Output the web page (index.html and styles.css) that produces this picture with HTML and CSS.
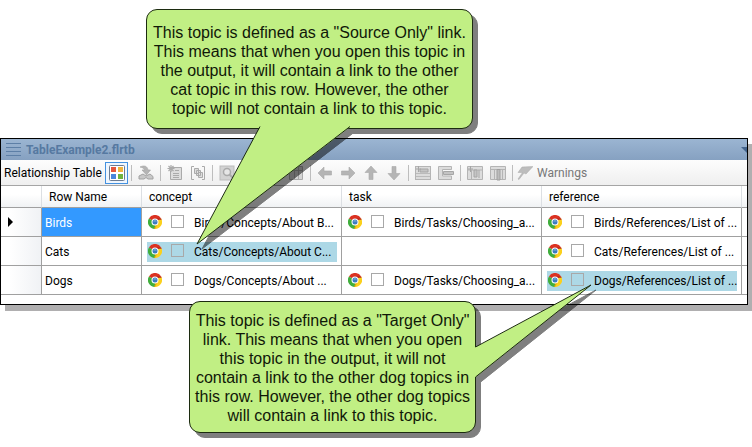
FILE: index.html
```html
<!DOCTYPE html>
<html lang="en">
<head>
<meta charset="utf-8">
<title>TableExample2.flrtb</title>
<link rel="stylesheet" href="styles.css">
</head>
<body>
<svg class="defs" aria-hidden="true">
  <symbol id="chrome" viewBox="0 0 14 14">
    <path d="M7 7 .9 3.5A7 7 0 0 1 13.1 3.5Z" fill="#db3222"/>
    <path d="M7 7 13.1 3.5A7 7 0 0 1 7 14Z" fill="#fbd01c"/>
    <path d="M7 7 7 14A7 7 0 0 1 .9 3.5Z" fill="#3fae3c"/>
    <path d="M7 3.6H13.1L13.6 4.8H8Z" fill="#b3251b"/>
    <path d="M9.9 8.6 6.9 14 6 13.8 8 9Z" fill="#d9a514"/>
    <circle cx="7" cy="7" r="3.5" fill="#fff"/>
    <circle cx="7" cy="7" r="2.5" fill="#3c7cc0"/>
    <path d="M5.2 6.4a2 2 0 0 1 3.6 0Z" fill="#7fb0de"/>
  </symbol>
</svg>
<main class="scene">
  <section class="window">
    <header class="titlebar">
      <svg class="grip" viewBox="0 0 15 14"><path d="M0 .5H15M0 4.5H15M0 8.5H15M0 12.5H15" stroke="#5d7fa6"/></svg>
      <h1>TableExample2.flrtb</h1>
      <svg class="caret" viewBox="0 0 6 6"><path d="M0 0H6V6Z" fill="#44648c"/></svg>
    </header>
    <div class="toolbar">
      <span class="toolbar-title">Relationship Table</span>
      <button class="tool active" aria-label="Show styles"><svg viewBox="0 0 16 16"><rect x=".5" y=".5" width="15" height="15" rx="1" fill="#fff" stroke="#6d7c92"/><rect x="2" y="2" width="5" height="5" fill="#e4573d"/><rect x="9" y="2" width="5" height="5" fill="#f0b43c"/><rect x="2" y="9" width="5" height="5" fill="#4a86dc"/><rect x="9" y="9" width="5" height="5" fill="#6fb33c"/></svg></button>
      <span class="sep"></span>
      <button class="tool" aria-label="Open topic"><svg viewBox="0 0 16 16"><path d="M2 2C6 0 9.500 1 10 5H12.500L8.500 10 4 5H6.500C6 3 4 2.500 2 2Z" fill="#b4b4b4" stroke="#a2a2a2" stroke-width=".6"/><path d="M1 11 5 9 8 11 12 9 15 11.500V14H10L8 12.500 6 14H1Z" fill="#c8c8c8" stroke="#a2a2a2"/></svg></button>
      <span class="sep"></span>
      <button class="tool" aria-label="New row"><svg viewBox="0 0 16 16"><path d="M4.500 2.500H14.500V14.500H3.500V6" fill="#ddd" stroke="#aaa"/><path d="M8 5.500H12M6 8.500H12M6 10.500H12M6 12.500H12" stroke="#aaa"/><path d="M4 0V7M.5 3.500H7.500M1.500 1 6.500 6M6.500 1 1.500 6" stroke="#aaa" stroke-width="1.200"/></svg></button>
      <button class="tool" aria-label="Row properties"><svg viewBox="0 0 16 16"><path d="M4 1.500H1.500V14.500H4M12 1.500H14.500V14.500H12" fill="none" stroke="#aaa"/><path d="M4.500 3.500H8.500V8.500H4.500ZM6.500 5.500H10.500V10.500H6.500ZM8.500 7.500H12.500V12.500H8.500Z" fill="#ddd" stroke="#aaa"/></svg></button>
      <span class="sep"></span>
      <button class="tool" aria-label="Preview"><svg viewBox="0 0 16 16"><rect x="1" y="1" width="14" height="14" fill="#d3d3d3" stroke="#bbb"/><circle cx="8" cy="7" r="3.500" fill="#e6e6e6" stroke="#aaa" stroke-width="1.500"/><path d="M10.500 9.500 14 13" stroke="#aaa" stroke-width="2"/></svg></button>
      <button class="tool" aria-label="Cut"></button>
      <button class="tool" aria-label="Copy"></button>
      <button class="tool" aria-label="Insert column"><svg viewBox="0 0 16 16"><path d="M1.500 1.500H14.500V14.500H1.500ZM6.500 2V14M10.500 2V14M2 5.500H14" fill="#d5d5d5" stroke="#aaa"/></svg></button>
      <span class="sep"></span>
      <button class="tool" aria-label="Move left"><svg viewBox="0 0 16 16"><path d="M1 8 7 2V6H14.500V10H7V14Z" fill="#b5b5b5" stroke="#aaa" stroke-width=".6"/></svg></button>
      <button class="tool" aria-label="Move right"><svg viewBox="0 0 16 16"><path d="M15 8 9 2V6H1.500V10H9V14Z" fill="#b5b5b5" stroke="#aaa" stroke-width=".6"/></svg></button>
      <button class="tool" aria-label="Move up"><svg viewBox="0 0 16 16"><path d="M8 1 14 7.500H10V14.500H6V7.500H2Z" fill="#b5b5b5" stroke="#aaa" stroke-width=".6"/></svg></button>
      <button class="tool" aria-label="Move down"><svg viewBox="0 0 16 16"><path d="M8 15 14 8.500H10V1.500H6V8.500H2Z" fill="#b5b5b5" stroke="#aaa" stroke-width=".6"/></svg></button>
      <span class="sep"></span>
      <button class="tool" aria-label="Insert row"><svg viewBox="0 0 16 16"><rect x=".5" y="1.500" width="15" height="13" fill="#dcdcdc" stroke="#b4b4b4"/><path d="M1 8.500H15M1 11.500H15" stroke="#bbb"/><path d="M5 4H13V7H5Z" fill="#c4c4c4" stroke="#a6a6a6"/><path d="M3.500 1V7M1 4H6" stroke="#a6a6a6"/></svg></button>
      <button class="tool" aria-label="Delete row"><svg viewBox="0 0 16 16"><path d="M.5 1.500H13.500V4.500H4.500V11H13.500V14.500H.5Z" fill="#dcdcdc" stroke="#b4b4b4"/><path d="M5.500 6.500H15.500V9.500H5.500Z" fill="#c4c4c4" stroke="#a6a6a6"/></svg></button>
      <span class="sep"></span>
      <button class="tool" aria-label="Insert column right"><svg viewBox="0 0 16 16"><path d="M.5 1.500H15.500V14.500H.5ZM1 5H15M4.500 5V14" fill="#dcdcdc" stroke="#b4b4b4"/><path d="M7 5H10V12H7ZM12 5V13" fill="#c4c4c4" stroke="#a6a6a6"/><path d="M3.500 1V7M1 4H6" stroke="#a6a6a6"/></svg></button>
      <button class="tool" aria-label="Delete column"><svg viewBox="0 0 16 16"><path d="M.5 1.500H15.500V14.500H.5ZM1 4.500H15M4.500 5V14M12.500 5V14" fill="#dcdcdc" stroke="#b4b4b4"/><path d="M7 4.500H10V15H7Z" fill="#bcbcbc" stroke="#a0a0a0"/></svg></button>
      <span class="sep"></span>
      <button class="warnings"><svg viewBox="0 0 16 16"><path d="M5 2 16 1.500 9 9 7 8 2 14.500 1 14 5.500 7.500 1 7.500Z" fill="#bdbdbd" stroke="#aaa" stroke-width=".5"/></svg>Warnings</button>
    </div>
    <table class="grid">
      <colgroup><col class="c-mark"><col class="c-name"><col class="c-link"><col class="c-link"><col class="c-link"><col></colgroup>
      <thead>
        <tr><th></th><th>Row Name</th><th>concept</th><th>task</th><th>reference</th><th></th></tr>
      </thead>
      <tbody>
        <tr>
          <td class="mark"><svg viewBox="0 0 5 10"><path d="M0 0 5 5 0 10Z"/></svg></td>
          <td class="name selected">Birds</td>
          <td><label class="link"><svg><use href="#chrome"/></svg><input type="checkbox"><span>Birds/Concepts/About B...</span></label></td>
          <td><label class="link"><svg><use href="#chrome"/></svg><input type="checkbox"><span>Birds/Tasks/Choosing_a...</span></label></td>
          <td><label class="link"><svg><use href="#chrome"/></svg><input type="checkbox"><span>Birds/References/List of ...</span></label></td>
          <td></td>
        </tr>
        <tr>
          <td class="mark"></td>
          <td class="name">Cats</td>
          <td><label class="link marked"><svg><use href="#chrome"/></svg><input type="checkbox"><span>Cats/Concepts/About C...</span></label></td>
          <td></td>
          <td><label class="link"><svg><use href="#chrome"/></svg><input type="checkbox"><span>Cats/References/List of ...</span></label></td>
          <td></td>
        </tr>
        <tr>
          <td class="mark"></td>
          <td class="name">Dogs</td>
          <td><label class="link"><svg><use href="#chrome"/></svg><input type="checkbox"><span>Dogs/Concepts/About ...</span></label></td>
          <td><label class="link"><svg><use href="#chrome"/></svg><input type="checkbox"><span>Dogs/Tasks/Choosing_a...</span></label></td>
          <td><label class="link marked"><svg><use href="#chrome"/></svg><input type="checkbox"><span>Dogs/References/List of ...</span></label></td>
          <td></td>
        </tr>
      </tbody>
    </table>
  </section>

  <aside class="callout source">
    <p>This topic is defined as a "Source Only" link.<br>This means that when you open this topic in<br>the output, it will contain a link to the other<br>cat topic in this row. However, the other<br>topic will not contain a link to this topic.</p>
    <svg class="tail" viewBox="0 0 160 122"><path d="M64 0V2L1 119 154 2V0Z" fill="#c1ef84"/><path d="M64 1.500 1 119 154 1.500" fill="none" stroke="#1c2b10"/></svg>
  </aside>
  <aside class="callout target">
    <p>This topic is defined as a "Target Only"<br>link. This means that when you open<br>this topic in the output, it will not<br>contain a link to the other dog topics in<br>this row. However, the other dog topics<br>will contain a link to this topic.</p>
    <svg class="tail" viewBox="0 0 120 96"><path d="M0 63H2L117 1 2 93H0Z" fill="#c1ef84"/><path d="M1.500 63 117 1 1.500 93" fill="none" stroke="#1c2b10"/></svg>
  </aside>
</main>
</body>
</html>
```
FILE: styles.css
```css
* { box-sizing: border-box; }
body {
  margin: 0;
  background: #fff;
  color: #000;
  font: 12px/16px Roboto, "Open Sans", sans-serif;
}
.defs { display: none; }
.scene {
  position: relative;
  min-height: 447px;
  padding: 138px 4px 0 0;
  overflow: hidden;
}
.window {
  padding-bottom: 9px;
  border: 1px solid #000;
  background: #fff;
  box-shadow: 5px 6px 0 #b0afb0;
}
.titlebar {
  display: flex;
  align-items: center;
  height: 21px;
  padding-left: 5px;
  background: linear-gradient(#9bb5d2, #86a1c1);
}
.titlebar h1 {
  flex: 1;
  margin: 0 0 0 5px;
  color: #5679a1;
  font-size: 12px;
  font-weight: 700;
}
.grip { width: 15px; height: 14px; }
.caret { width: 6px; height: 6px; }
.toolbar {
  display: flex;
  align-items: center;
  height: 26px;
  padding-left: 3px;
  border-bottom: 1px solid #a5a5a5;
  background: linear-gradient(#fdfdfd, #efefef);
}
.toolbar-title { width: 101px; white-space: nowrap; }
.tool {
  display: flex;
  flex: none;
  align-items: center;
  justify-content: center;
  width: 23px;
  height: 22px;
  padding: 0;
  border: 0;
  background: none;
}
.tool.active { border: 1px solid #4391e0; background: #eff6fe; }
.tool svg, .warnings svg { width: 16px; height: 16px; }
.sep {
  flex: none;
  width: 1px;
  height: 16px;
  margin: 0 2px 0 3px;
  background: #bdbdbd;
}
.warnings {
  display: flex;
  align-items: center;
  gap: 4px;
  padding: 0 2px;
  border: 0;
  background: none;
  color: #777;
  font: inherit;
}
.grid {
  width: 100%;
  table-layout: fixed;
  border-spacing: 0;
}
.c-mark { width: 41px; }
.c-name { width: 100px; }
.c-link { width: 200px; }
.grid th {
  height: 22px;
  padding: 0 7px;
  border-right: 1px solid #dcdfe3;
  border-bottom: 1px solid #a0a0a0;
  background: linear-gradient(#fff 40%, #f0f2f4);
  font-weight: 400;
  text-align: left;
}
.grid td {
  height: 29px;
  padding: 2px 4px 0 5px;
  border-right: 1px solid #a0a0a0;
  border-bottom: 1px solid #a0a0a0;
}
.grid tr > :last-child { padding: 0; border-right: 0; }
.grid .mark {
  padding: 0 0 0 7px;
  background: linear-gradient(90deg, #fff 20%, #f0f2f5);
}
.mark svg { display: block; width: 5px; height: 10px; }
.grid .name { padding: 2px 3px 0; }
.grid .selected { background: #3399ff; color: #fff; }
.link {
  display: flex;
  align-items: center;
  height: 20px;
  padding-left: 1px;
}
.link svg { flex: none; width: 14px; height: 14px; margin-bottom: 3px; }
.link input {
  appearance: none;
  flex: none;
  width: 13px;
  height: 13px;
  margin: 0 10px 3px 9px;
  border: 1px solid #a8a8a8;
}
.link span { white-space: nowrap; }
.marked { background: #add8e6; }
.callout {
  position: absolute;
  border: 1px solid #1c2b10;
  border-radius: 11px;
  background: #c1ef84;
  filter: drop-shadow(5px 5px 0 rgba(0, 0, 0, 0.5));
  color: #101808;
  font: 16px/19px "Liberation Sans", Arial, sans-serif;
  text-align: center;
}
.callout p { margin: 0; white-space: nowrap; }
.source { top: 9px; left: 146px; width: 327px; padding: 13px 0 10px; }
.target { top: 301px; left: 189px; width: 287px; padding: 9px 0 7px; }
.tail { position: absolute; }
.source .tail { top: 115px; left: 49px; width: 160px; height: 122px; }
.target .tail { top: -18px; left: 284px; width: 120px; height: 96px; }
```
